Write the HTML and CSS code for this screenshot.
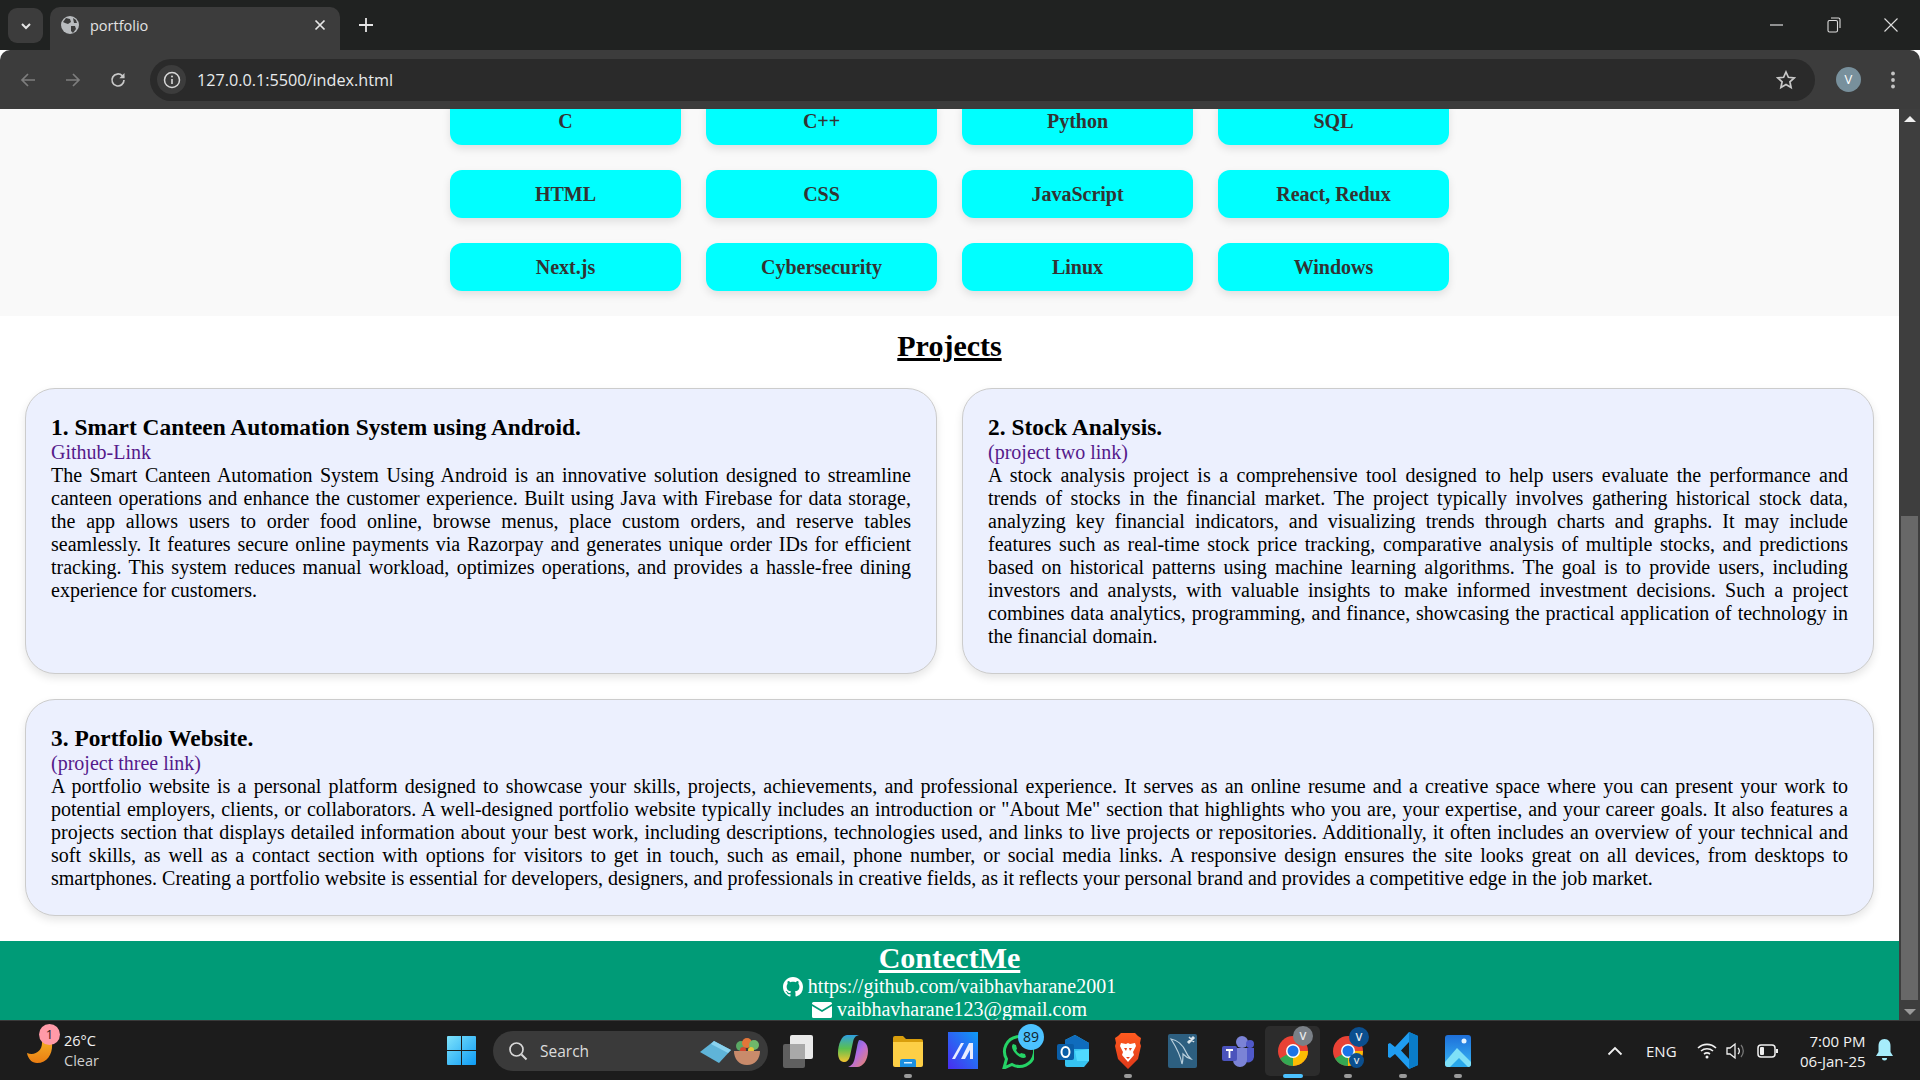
FILE: index.html
```html
<!DOCTYPE html>
<html lang="en">
<head>
  <meta charset="UTF-8">
  <title>portfolio</title>
  <link rel="stylesheet" href="styles.css">
</head>
<body>

  <!-- browser tabs -->
  <div class="tabstrip">
    <div class="tab-search">
      <svg width="14" height="14" viewBox="0 0 14 14"><path d="M3 5l4 4 4-4" fill="none" stroke="#e6e6e6" stroke-width="2"/></svg>
    </div>
    <div class="tab">
      <svg class="tab-globe" width="18" height="18" viewBox="0 0 18 18"><circle cx="9" cy="9" r="9" fill="#b9bcbf"/><path d="M5 2l4 1 1 3-3 2-3-1-2-1zM10 10l4 0 1 3-3 4-2-2zM12 2l3 2 1 3-3 0z" fill="#3c3c3c"/></svg>
      <span class="tab-title">portfolio</span>
      <svg class="tab-close" width="12" height="12" viewBox="0 0 12 12"><path d="M1.500 1.500l9 9M10.500 1.500l-9 9" stroke="#e6e6e6" stroke-width="1.700"/></svg>
    </div>
    <svg class="tab-new" width="14" height="14" viewBox="0 0 14 14"><path d="M7 0v14M0 7h14" stroke="#e6e6e6" stroke-width="1.800"/></svg>
    <div class="window-btns">
      <svg width="14" height="14" viewBox="0 0 14 14"><path d="M0 7h13" stroke="#ddd" stroke-width="1.200"/></svg>
      <svg width="14" height="16" viewBox="0 0 14 16"><rect x="1" y="3.500" width="9.500" height="11.500" rx="1.500" fill="none" stroke="#ddd" stroke-width="1.100"/><path d="M4 1h7.500a1.500 1.500 0 0 1 1.500 1.500V11" fill="none" stroke="#ddd" stroke-width="1.100"/></svg>
      <svg width="14" height="14" viewBox="0 0 14 14"><path d="M0.500 0.500l13 13M13.500 0.500l-13 13" stroke="#ddd" stroke-width="1.100"/></svg>
    </div>
  </div>

  <!-- address bar -->
  <div class="toolbar">
    <svg class="nav-icon" width="18" height="18" viewBox="0 0 18 18"><path d="M16 9H3M9 3L3 9l6 6" fill="none" stroke="#7d7d7d" stroke-width="1.700"/></svg>
    <svg class="nav-icon" width="18" height="18" viewBox="0 0 18 18"><path d="M2 9h13M9 3l6 6-6 6" fill="none" stroke="#7d7d7d" stroke-width="1.700"/></svg>
    <svg class="nav-icon" width="18" height="18" viewBox="0 0 18 18"><path d="M15 9a6 6 0 1 1-1.800-4.300L15 6.500" fill="none" stroke="#c8c8c8" stroke-width="1.700"/><path d="M15.500 2v5.200h-5.200z" fill="#c8c8c8"/></svg>
    <div class="urlbar">
      <div class="url-info">
        <svg width="18" height="18" viewBox="0 0 18 18"><circle cx="9" cy="9" r="7.500" fill="none" stroke="#d8d8d8" stroke-width="1.500"/><path d="M9 8v5" stroke="#d8d8d8" stroke-width="1.600"/><circle cx="9" cy="5.500" r="1" fill="#d8d8d8"/></svg>
      </div>
      <span class="url-text">127.0.0.1:5500/index.html</span>
      <svg class="url-star" width="20" height="20" viewBox="0 0 20 20"><path d="M10 2l2.400 5.300 5.800.6-4.300 3.900 1.200 5.700L10 14.600l-5.100 2.900 1.200-5.700L1.800 7.900l5.800-.6z" fill="none" stroke="#c8c8c8" stroke-width="1.700"/></svg>
    </div>
    <div class="avatar">V</div>
    <svg width="4" height="18" viewBox="0 0 4 18"><circle cx="2" cy="2.500" r="1.900" fill="#c4c4c4"/><circle cx="2" cy="9" r="1.900" fill="#c4c4c4"/><circle cx="2" cy="15.500" r="1.900" fill="#c4c4c4"/></svg>
  </div>

  <div class="viewport">
    <div class="page">
      <section class="skills">
        <div class="skill">C</div>
        <div class="skill">C++</div>
        <div class="skill">Python</div>
        <div class="skill">SQL</div>
        <div class="skill">HTML</div>
        <div class="skill">CSS</div>
        <div class="skill">JavaScript</div>
        <div class="skill">React, Redux</div>
        <div class="skill">Next.js</div>
        <div class="skill">Cybersecurity</div>
        <div class="skill">Linux</div>
        <div class="skill">Windows</div>
      </section>

      <h2 class="section-title">Projects</h2>

      <section class="projects">
        <div class="card">
          <h3>1. Smart Canteen Automation System using Android.</h3>
          <a href="#">Github-Link</a>
          <p>The Smart Canteen Automation System Using Android is an innovative solution designed to streamline canteen operations and enhance the customer experience. Built using Java with Firebase for data storage, the app allows users to order food online, browse menus, place custom orders, and reserve tables seamlessly. It features secure online payments via Razorpay and generates unique order IDs for efficient tracking. This system reduces manual workload, optimizes operations, and provides a hassle-free dining experience for customers.</p>
        </div>
        <div class="card">
          <h3>2. Stock Analysis.</h3>
          <a href="#">(project two link)</a>
          <p>A stock analysis project is a comprehensive tool designed to help users evaluate the performance and trends of stocks in the financial market. The project typically involves gathering historical stock data, analyzing key financial indicators, and visualizing trends through charts and graphs. It may include features such as real-time stock price tracking, comparative analysis of multiple stocks, and predictions based on historical patterns using machine learning algorithms. The goal is to provide users, including investors and analysts, with valuable insights to make informed investment decisions. Such a project combines data analytics, programming, and finance, showcasing the practical application of technology in the financial domain.</p>
        </div>
        <div class="card card-wide">
          <h3>3. Portfolio Website.</h3>
          <a href="#">(project three link)</a>
          <p>A portfolio website is a personal platform designed to showcase your skills, projects, achievements, and professional experience. It serves as an online resume and a creative space where you can present your work to potential employers, clients, or collaborators. A well-designed portfolio website typically includes an introduction or "About Me" section that highlights who you are, your expertise, and your career goals. It also features a projects section that displays detailed information about your best work, including descriptions, technologies used, and links to live projects or repositories. Additionally, it often includes an overview of your technical and soft skills, as well as a contact section with options for visitors to get in touch, such as email, phone number, or social media links. A responsive design ensures the site looks great on all devices, from desktops to smartphones. Creating a portfolio website is essential for developers, designers, and professionals in creative fields, as it reflects your personal brand and provides a competitive edge in the job market.</p>
        </div>
      </section>

      <footer class="contact">
        <h2>ContectMe</h2>
        <div class="contact-line">
          <svg width="20" height="20" viewBox="0 0 16 16"><path fill="#fff" d="M8 0C3.580 0 0 3.580 0 8c0 3.540 2.290 6.530 5.470 7.590.4.07.55-.17.55-.38 0-.19-.01-.82-.01-1.490-2.010.37-2.530-.49-2.690-.94-.09-.23-.48-.94-.82-1.130-.28-.15-.68-.52-.01-.53.63-.01 1.080.58 1.230.82.72 1.210 1.870.87 2.330.66.07-.52.28-.87.51-1.070-1.780-.2-3.640-.89-3.640-3.950 0-.87.31-1.590.82-2.150-.08-.2-.36-1.020.08-2.120 0 0 .67-.21 2.200.82.64-.18 1.320-.27 2-.27.68 0 1.360.09 2 .27 1.530-1.040 2.200-.82 2.200-.82.44 1.100.16 1.920.08 2.120.51.56.82 1.270.82 2.150 0 3.070-1.870 3.750-3.650 3.950.29.25.54.73.54 1.480 0 1.070-.01 1.930-.01 2.200 0 .21.15.46.55.38A8.013 8.013 0 0016 8c0-4.420-3.580-8-8-8z"/></svg>
          <span>https://github.com/vaibhavharane2001</span>
        </div>
        <div class="contact-line">
          <svg width="20" height="16" viewBox="0 0 20 16"><path fill="#fff" d="M1.500 0h17A1.500 1.500 0 0 1 20 1.500v.6l-10 6-10-6v-.6A1.500 1.500 0 0 1 1.500 0zM0 4l10 6 10-6v10.500a1.500 1.500 0 0 1-1.500 1.500h-17A1.500 1.500 0 0 1 0 14.500z"/></svg>
          <span>vaibhavharane123@gmail.com</span>
        </div>
      </footer>
    </div>

    <div class="scrollbar">
      <svg width="12" height="6" viewBox="0 0 12 6"><path d="M6 0l6 6H0z" fill="#f0f0f0"/></svg>
      <div class="scroll-track"><div class="scroll-thumb"></div></div>
      <svg width="12" height="6" viewBox="0 0 12 6"><path d="M6 6l6-6H0z" fill="#9a9a9a"/></svg>
    </div>
  </div>

  <!-- windows taskbar -->
  <div class="taskbar">
    <div class="weather">
      <svg class="weather-moon" width="28" height="36" viewBox="0 0 28 36">
        <defs><linearGradient id="moonGrad" x1="0" y1="0" x2="0" y2="1"><stop offset="0" stop-color="#f9c32e"/><stop offset="1" stop-color="#ea7d12"/></linearGradient></defs>
        <path d="M16 2C29 5 29 35 10 35 5 35 1 31 0 25c8 3 15-2 15-10z" fill="url(#moonGrad)"/>
      </svg>
      <span class="weather-badge">1</span>
      <div class="weather-text">
        <span class="weather-temp">26°C</span>
        <span class="weather-desc">Clear</span>
      </div>
    </div>

    <svg class="start" width="29" height="29" viewBox="0 0 29 29">
      <defs><linearGradient id="winGrad" x1="0" y1="0" x2="1" y2="1"><stop offset="0" stop-color="#7fe3fb"/><stop offset="1" stop-color="#0d9bf5"/></linearGradient></defs>
      <path d="M0 1a1 1 0 0 1 1-1h13v14H0zM15 0h13a1 1 0 0 1 1 1v13H15zM0 15h14v14H1a1 1 0 0 1-1-1zM15 15h14v13a1 1 0 0 1-1 1H15z" fill="url(#winGrad)"/>
    </svg>

    <div class="searchbox">
      <svg width="20" height="20" viewBox="0 0 20 20"><circle cx="8.500" cy="8.500" r="6.500" fill="none" stroke="#d8d8d8" stroke-width="1.700"/><path d="M13.500 13.500l5 5" stroke="#d8d8d8" stroke-width="2"/></svg>
      <span>Search</span>
      <svg class="search-scroll" width="31" height="24" viewBox="0 0 31 24"><path d="M0 13L14 2l17 9-12 13z" fill="#5fb4d8"/><path d="M14 2l17 9-3 3-17-9z" fill="#8ad2ee"/></svg>
      <svg class="search-bowl" width="26" height="28" viewBox="0 0 26 28"><circle cx="7" cy="9" r="5" fill="#5aa865"/><circle cx="13" cy="6" r="5" fill="#e2763a"/><circle cx="20" cy="8" r="5" fill="#6fb86b"/><circle cx="17" cy="13" r="3" fill="#e8c53a"/><circle cx="9" cy="13" r="3" fill="#d6472f"/><path d="M0 14h26c0 8-5 14-13 14S0 22 0 14z" fill="#c98b6b"/></svg>
    </div>

    <div class="apps">
      <div class="app">
        <svg width="32" height="34" viewBox="0 0 32 34"><rect x="1" y="10" width="22" height="24" rx="2" fill="#5f5f5f"/><rect x="8" y="1" width="23" height="24" rx="2" fill="#e9e9e9"/><rect x="8" y="10" width="15" height="15" fill="#a9a9a9"/></svg>
      </div>
      <div class="app">
        <svg width="30" height="32" viewBox="0 0 30 32">
          <defs>
            <linearGradient id="copA" x1="0" y1="0" x2="0" y2="1"><stop offset="0" stop-color="#2f9fe0"/><stop offset=".5" stop-color="#5bc04f"/><stop offset="1" stop-color="#f4c430"/></linearGradient>
            <linearGradient id="copB" x1="0" y1="0" x2="1" y2="1"><stop offset="0" stop-color="#3b6fe0"/><stop offset=".5" stop-color="#b56be0"/><stop offset="1" stop-color="#f08a5c"/></linearGradient>
          </defs>
          <path d="M21 5c5 0 9 4 9 11 0 9-5 16-11 16H10c5-2 6-5 7-10l2-10c.5-3 1-5 2-7z" fill="url(#copB)"/>
          <path d="M9 0h12c-4 1-5 3-6 7l-3 14c-1 4-3 6-6 6-4 0-6-4-6-9C0 9 4 0 9 0z" fill="url(#copA)"/>
        </svg>
      </div>
      <div class="app running">
        <svg width="30" height="32" viewBox="0 0 30 32"><path d="M0 3a2 2 0 0 1 2-2h8l3 3h15a2 2 0 0 1 2 2v4H0z" fill="#d99e0c"/><path d="M0 7h30v23a2 2 0 0 1-2 2H2a2 2 0 0 1-2-2z" fill="#fdcf46"/><path d="M7 26a2 2 0 0 1 2-2h12a2 2 0 0 1 2 2v6H7z" fill="#1a8fe0"/><rect x="11" y="27" width="8" height="1.500" fill="#d8f0ff"/></svg>
      </div>
      <div class="app">
        <svg width="30" height="37" viewBox="0 0 30 37">
          <defs><linearGradient id="appGrad" x1="0" y1="1" x2="1" y2="0"><stop offset="0" stop-color="#4a2cf0"/><stop offset="1" stop-color="#0d9cf5"/></linearGradient></defs>
          <rect width="30" height="37" fill="url(#appGrad)"/>
          <path d="M4 27L13 11h3L7 27zM13 27l8-16h4v16h-3v-9l-5 9z" fill="#e9ecff"/>
        </svg>
      </div>
      <div class="app">
        <svg width="32" height="36" viewBox="0 0 32 36"><path d="M2 35l2.500-9A15 15 0 1 1 10 31.500z" fill="none" stroke="#25d366" stroke-width="3"/><path d="M11 11c-2 2-1 6 3 10s8 5 10 3l-1-3-4-1-1 1c-2-1-3-2-4-4l1-1-1-4z" fill="#25d366"/></svg>
        <span class="app-badge">89</span>
      </div>
      <div class="app">
        <svg width="32" height="32" viewBox="0 0 32 32"><path d="M8 5l10-5 14 8v18l-5 6H10a2 2 0 0 1-2-2z" fill="#36c3f1"/><path d="M8 5l10-5 14 8v6H8z" fill="#0f6cbd"/><path d="M18 16l14-2v12H20z" fill="#50d9ff"/><rect y="9" width="17" height="16" rx="2" fill="#0a5ea8"/><ellipse cx="8.500" cy="17" rx="4" ry="5" fill="none" stroke="#fff" stroke-width="2"/></svg>
      </div>
      <div class="app running">
        <svg width="26" height="36" viewBox="0 0 26 36">
          <defs><linearGradient id="braveGrad" x1="0" y1="0" x2="0" y2="1"><stop offset="0" stop-color="#ff5a1f"/><stop offset="1" stop-color="#e0391a"/></linearGradient></defs>
          <path d="M6 0h14l3 3 3 2-1 5 1 3-3 13-10 10L3 26 0 13l1-3-1-5 3-2z" fill="url(#braveGrad)"/>
          <path d="M6 10l5 1 2-1 2 1 5-1 1 3-3 6 1 3-6 7-6-7 1-3-3-6z" fill="#fff"/>
          <path d="M9 15h3l-1 3zM14 15h3l-2 3zM11 24h4l-2 2z" fill="#e8421a"/>
        </svg>
      </div>
      <div class="app">
        <svg width="29" height="34" viewBox="0 0 29 34"><rect width="29" height="34" rx="2" fill="#2d5f80"/><path d="M3 5c6 1 12 6 15 13 1 3 3 5 5 7-4-1-6-3-8-5 0 3 0 7-1 10-1-6-4-14-11-25z" fill="none" stroke="#b9cfdc" stroke-width="1.200"/><path d="M20 8l5-5 1 1-5 5zM21 3l5 5" stroke="#d8e4ea" stroke-width="1.500"/></svg>
      </div>
      <div class="app">
        <svg width="32" height="32" viewBox="0 0 32 32"><circle cx="20" cy="7" r="6" fill="#7b83d6"/><circle cx="28" cy="9" r="4" fill="#5059c9"/><path d="M22 13h10v9a6 6 0 0 1-8 5z" fill="#5059c9"/><path d="M8 13h17v12a7 7 0 0 1-14 0z" fill="#7b83d6"/><rect y="11" width="15" height="15" rx="2" fill="#4b53bc"/><path d="M4 15h7M7.500 15v8" stroke="#fff" stroke-width="1.800"/></svg>
      </div>
      <div class="app active">
        <svg width="30" height="30" viewBox="0 0 30 30"><circle cx="15" cy="15" r="15" fill="#e94235"/><path d="M15 15L2 22.500A15 15 0 0 0 15 30z" fill="#34a853"/><path d="M15 15h15A15 15 0 0 1 15 30l0 0z" fill="#fbbc04"/><circle cx="15" cy="15" r="7" fill="#fff"/><circle cx="15" cy="15" r="5.500" fill="#1a73e8"/></svg>
        <span class="chrome-user grey">V</span>
      </div>
      <div class="app running">
        <svg width="30" height="30" viewBox="0 0 30 30"><circle cx="15" cy="15" r="15" fill="#e94235"/><path d="M15 15L2 22.500A15 15 0 0 0 15 30z" fill="#34a853"/><path d="M15 15h15A15 15 0 0 1 15 30l0 0z" fill="#fbbc04"/><circle cx="15" cy="15" r="7" fill="#fff"/><circle cx="15" cy="15" r="5.500" fill="#1a73e8"/></svg>
        <span class="chrome-user blue">V</span>
        <span class="chrome-user blue small">V</span>
      </div>
      <div class="app running">
        <svg width="30" height="37" viewBox="0 0 30 37"><path d="M21 0l9 4v29l-9 4L7 22l-5 4-2-1V12l2-1 5 4zM21 10l-8 8.500 8 8.500z" fill="#1f9cf0"/><path d="M21 0l9 4v29l-9 4z" fill="#0a7cc8"/></svg>
      </div>
      <div class="app running">
        <svg width="26" height="32" viewBox="0 0 26 32">
          <defs><linearGradient id="photoGrad" x1="0" y1="0" x2="0" y2="1"><stop offset="0" stop-color="#1e6fd9"/><stop offset="1" stop-color="#37b6f6"/></linearGradient></defs>
          <rect width="26" height="32" rx="3" fill="url(#photoGrad)"/>
          <circle cx="19" cy="6" r="2.500" fill="#e6f4ff"/>
          <path d="M0 27l12-14 14 14v2a3 3 0 0 1-3 3H3a3 3 0 0 1-3-3z" fill="#7fe0f7"/>
          <path d="M5 32l9-9 9 9z" fill="#29a7ea"/>
        </svg>
      </div>
    </div>

    <div class="tray">
      <svg class="tray-chevron" width="16" height="10" viewBox="0 0 16 10"><path d="M1.500 8.500L8 2l6.500 6.500" fill="none" stroke="#f0f0f0" stroke-width="1.800"/></svg>
      <span class="tray-lang">ENG</span>
      <svg class="tray-wifi" width="20" height="17" viewBox="0 0 20 17"><path d="M1 6a13 13 0 0 1 18 0M4 9a9 9 0 0 1 12 0M7 12a5 5 0 0 1 6 0" fill="none" stroke="#f0f0f0" stroke-width="1.600"/><circle cx="10" cy="15" r="1.500" fill="#f0f0f0"/></svg>
      <svg class="tray-sound" width="20" height="18" viewBox="0 0 20 18"><path d="M1 6h3l5-4v14l-5-4H1z" fill="none" stroke="#f0f0f0" stroke-width="1.300"/><path d="M12 6a4 4 0 0 1 0 6" fill="none" stroke="#f0f0f0" stroke-width="1.300"/><path d="M15 3a9 9 0 0 1 0 12" fill="none" stroke="#777" stroke-width="1.300"/></svg>
      <svg class="tray-battery" width="21" height="14" viewBox="0 0 21 14"><rect x="1" y="1" width="17" height="12" rx="3" fill="none" stroke="#f0f0f0" stroke-width="1.500"/><rect x="3" y="3" width="4" height="8" rx="1" fill="#f0f0f0"/><rect x="19" y="5" width="2" height="4" fill="#f0f0f0"/></svg>
      <div class="tray-clock">
        <span>7:00 PM</span>
        <span>06-Jan-25</span>
      </div>
      <svg class="tray-bell" width="17" height="23" viewBox="0 0 17 23"><path d="M8.500 0c4 0 6 3 6 7v6l2.500 4H0l2.500-4V7c0-4 2-7 6-7z" fill="#a6ecfb"/><path d="M6 19h5a2.500 2.500 0 0 1-5 0z" fill="#a6ecfb"/></svg>
    </div>
  </div>

</body>
</html>
```

FILE: styles.css
```css
* {
  box-sizing: border-box;
}

body {
  margin: 0;
  height: 1080px;
  overflow: hidden;
  display: flex;
  flex-direction: column;
  font-family: "Liberation Serif", serif;
  font-size: 20px;
  background: #fff;
}

/* browser chrome */
.tabstrip {
  height: 50px;
  flex: none;
  display: flex;
  background: #202221;
  padding-top: 7px;
  padding-left: 8px;
  font-family: "Open Sans", sans-serif;
}

.tab-search {
  width: 35px;
  height: 35px;
  margin-top: 1px;
  border-radius: 9px;
  background: #3c3c3c;
  display: flex;
  align-items: center;
  justify-content: center;
}

.tab {
  width: 290px;
  height: 43px;
  margin-left: 7px;
  border-radius: 10px 10px 0 0;
  background: #3c3c3c;
  display: flex;
  align-items: center;
  padding: 0 14px 7px 11px;
  color: #e3e3e3;
  font-size: 14.5px;
}

.tab-title {
  margin-left: 11px;
  flex: 1;
}

.tab-new {
  margin: 11px 0 0 19px;
}

.window-btns {
  margin-left: auto;
  width: 150px;
  height: 36px;
  display: flex;
  align-items: center;
  gap: 43px;
}

.toolbar {
  height: 59px;
  flex: none;
  display: flex;
  align-items: center;
  background: #3c3c3c;
  border-radius: 10px 10px 0 0;
  padding-left: 19px;
}

.nav-icon {
  margin-right: 27px;
}

.nav-icon:nth-child(3) {
  margin-right: 23px;
}

.urlbar {
  width: 1665px;
  height: 42px;
  display: flex;
  align-items: center;
  background: #2a2a2a;
  border-radius: 21px;
  padding-left: 7px;
  color: #e8eaed;
  font-family: "Open Sans", sans-serif;
  font-size: 16.2px;
}

.url-info {
  width: 29px;
  height: 29px;
  border-radius: 50%;
  background: #3c3c3c;
  display: flex;
  align-items: center;
  justify-content: center;
  margin-right: 11px;
}

.url-star {
  margin-left: auto;
  margin-right: 19px;
}

.avatar {
  width: 25px;
  height: 25px;
  margin: 0 30px 0 21px;
  border-radius: 50%;
  background: #78909c;
  color: #fff;
  font: 13px "Open Sans", sans-serif;
  text-align: center;
  line-height: 25px;
}

/* page area */
.viewport {
  height: 911px;
  flex: none;
  display: flex;
}

.page {
  flex: 1;
  overflow: hidden;
}

.skills {
  margin-top: -12px;
  padding-bottom: 25px;
  background: #f9f9f9;
  display: grid;
  grid-template-columns: repeat(4, 231px);
  gap: 25px;
  justify-content: center;
}

.skill {
  height: 48px;
  background: #00ffff;
  border-radius: 12px;
  box-shadow: 0 4px 8px rgba(0, 0, 0, 0.1);
  color: #333;
  font-weight: bold;
  text-align: center;
  line-height: 48px;
}

.section-title {
  margin: 13px 0 25px;
  font-size: 30px;
  text-align: center;
  text-decoration: underline;
}

.projects {
  display: grid;
  grid-template-columns: 1fr 1fr;
  gap: 25px;
  padding: 0 25px;
}

.card {
  padding: 25px;
  background: #ecf0fe;
  border: 1px solid #ccc;
  border-radius: 30px;
  box-shadow: 0 4px 8px rgba(0, 0, 0, 0.1);
}

.card-wide {
  grid-column: 1 / 3;
}

.card h3 {
  margin: 0;
  font-size: 23.4px;
}

.card a {
  color: #551a8b;
  text-decoration: none;
}

.card p {
  margin: 0;
  text-align: justify;
}

.contact {
  margin-top: 25px;
  background: #009b77;
  color: #fff;
  text-align: center;
}

.contact h2 {
  margin: 0;
  font-size: 30px;
  text-decoration: underline;
}

.contact-line {
  display: flex;
  align-items: center;
  justify-content: center;
  gap: 5px;
}

.scrollbar {
  width: 21px;
  flex: none;
  background: #3e3e3e;
  display: flex;
  flex-direction: column;
  align-items: center;
  padding: 7px 0 5px;
}

.scroll-track {
  flex: 1;
  width: 100%;
  padding: 0 2px;
  display: flex;
  flex-direction: column;
  justify-content: flex-end;
}

.scroll-thumb {
  width: 100%;
  height: 484px;
  margin-bottom: 9px;
  background: #686868;
}

/* taskbar */
.taskbar {
  height: 60px;
  flex: none;
  position: relative;
  display: flex;
  align-items: center;
  background: #1c1c1c;
  border-top: 1px solid #3a3a3a;
  color: #f2f2f2;
  font-family: "Open Sans", sans-serif;
}

.weather {
  width: 447px;
  padding-left: 27px;
  display: flex;
  align-items: center;
  position: relative;
}

.weather-moon {
  margin-bottom: 10px;
}

.weather-badge {
  position: absolute;
  left: 39px;
  top: -4px;
  width: 21px;
  height: 21px;
  border-radius: 50%;
  background: #ff9aa8;
  color: #2a1a1c;
  font-size: 13px;
  text-align: center;
  line-height: 21px;
}

.weather-text {
  display: flex;
  flex-direction: column;
  margin-left: 9px;
  font-size: 14.5px;
  line-height: 20px;
}

.weather-desc {
  color: #cfcfcf;
}

.start {
  flex: none;
}

.searchbox {
  width: 275px;
  height: 40px;
  margin-left: 17px;
  display: flex;
  align-items: center;
  padding-left: 15px;
  border-radius: 20px;
  background: #3a3a3a;
  color: #dcdcdc;
  font-size: 15.5px;
}

.searchbox span {
  margin-left: 12px;
}

.search-scroll {
  margin-left: auto;
}

.search-bowl {
  margin: 0 8px 0 3px;
}

.apps {
  display: flex;
  margin-left: 2px;
}

.app {
  width: 55px;
  height: 50px;
  position: relative;
  display: flex;
  align-items: center;
  justify-content: center;
}

.app.running::after,
.app.active::after {
  content: "";
  position: absolute;
  left: 24px;
  bottom: -2px;
  width: 8px;
  height: 4px;
  border-radius: 2px;
  background: #9a9a9a;
}

.app.active {
  background: #2c2c2c;
  border-radius: 5px;
}

.app.active::after {
  left: 18px;
  width: 20px;
  background: #4cc2ff;
}

.app-badge {
  position: absolute;
  left: 28px;
  top: -2px;
  width: 26px;
  height: 26px;
  border-radius: 50%;
  background: #4cc2ff;
  color: #10212b;
  font-size: 14px;
  text-align: center;
  line-height: 26px;
}

.chrome-user {
  position: absolute;
  border-radius: 50%;
  color: #e8eaed;
  font-size: 11px;
  font-weight: 600;
  text-align: center;
}

.chrome-user.grey {
  left: 28px;
  top: 0;
  width: 20px;
  height: 20px;
  line-height: 20px;
  background: #7a8087;
}

.chrome-user.blue {
  left: 29px;
  top: 1px;
  width: 20px;
  height: 20px;
  line-height: 20px;
  background: #0b4f8f;
}

.chrome-user.small {
  left: 29px;
  top: 27px;
  width: 15px;
  height: 15px;
  line-height: 15px;
  font-size: 9px;
}

.tray {
  position: absolute;
  top: 0;
  right: 0;
  height: 59px;
  width: 321px;
  display: flex;
  align-items: center;
  font-size: 15px;
}

.tray-chevron {
  margin-left: 8px;
}

.tray-lang {
  margin-left: 23px;
}

.tray-wifi {
  margin-left: 20px;
}

.tray-sound {
  margin-left: 9px;
}

.tray-battery {
  margin-left: 11px;
}

.tray-clock {
  width: 88px;
  display: flex;
  flex-direction: column;
  align-items: flex-end;
  line-height: 20px;
}

.tray-bell {
  margin-left: 10px;
}
```
